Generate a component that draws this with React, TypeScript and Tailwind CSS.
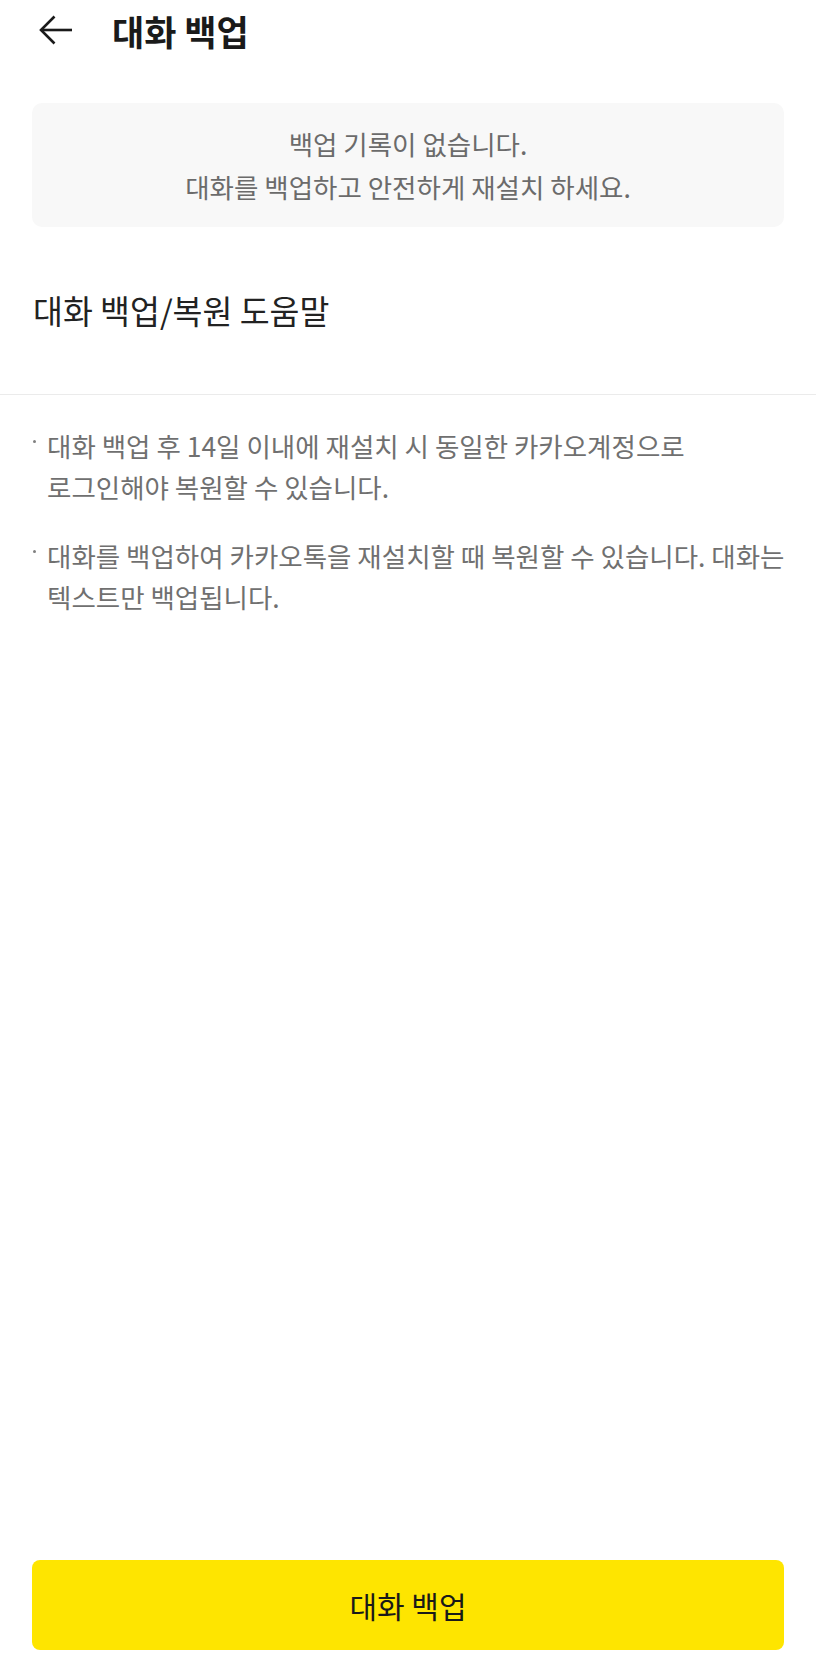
import React from "react";

export default function App() {
  return (
    <div className="min-h-[1661px] w-full bg-white flex flex-col [font-family:'Noto_Sans_CJK_KR','Noto_Sans',sans-serif]">
      <header className="h-[60px] flex items-center pl-[39px]">
        <svg width="34" height="30" viewBox="0 0 34 30" fill="none" stroke="#1a1a1a" strokeWidth="2.6" strokeLinecap="butt">
          <path d="M33 15H2" />
          <path d="M15.5 1.5L2 15l13.5 13.5" />
        </svg>
        <h1 className="ml-[39px] text-[35px] font-bold text-[#1a1a1a] leading-none">대화 백업</h1>
      </header>

      <div className="mx-[32px] mt-[43px] h-[124px] rounded-[10px] bg-[#f8f8f8] flex flex-col items-center justify-center text-[26.5px] leading-[43px] text-[#6b6b6b]">
        <p>백업 기록이 없습니다.</p>
        <p>대화를 백업하고 안전하게 재설치 하세요.</p>
      </div>

      <div className="h-[167px] flex items-center px-[33px]">
        <h2 className="text-[32.5px] text-[#222222] leading-none">대화 백업/복원 도움말</h2>
      </div>

      <div className="h-px bg-[#ebebeb]" />

      <ul className="pt-[30px] px-[33px] text-[26.5px] leading-[41px] text-[#707070] flex flex-col gap-[28px]">
        <li className="flex">
          <span className="w-[14px] shrink-0 pt-[15px]">
            <span className="block w-[3px] h-[3px] rounded-full bg-[#808080]" />
          </span>
          <span>
            <span className="block whitespace-nowrap">대화 백업 후 14일 이내에 재설치 시 동일한 카카오계정으로</span>
            <span className="block">로그인해야 복원할 수 있습니다.</span>
          </span>
        </li>
        <li className="flex">
          <span className="w-[14px] shrink-0 pt-[15px]">
            <span className="block w-[3px] h-[3px] rounded-full bg-[#808080]" />
          </span>
          <span>
            <span className="block whitespace-nowrap">대화를 백업하여 카카오톡을 재설치할 때 복원할 수 있습니다. 대화는</span>
            <span className="block">텍스트만 백업됩니다.</span>
          </span>
        </li>
      </ul>

      <button className="mt-auto mb-[11px] mx-[32px] h-[90px] rounded-[8px] bg-[#fee500] flex items-center justify-center text-[30px] text-[#191919]">
        대화 백업
      </button>
    </div>
  );
}
